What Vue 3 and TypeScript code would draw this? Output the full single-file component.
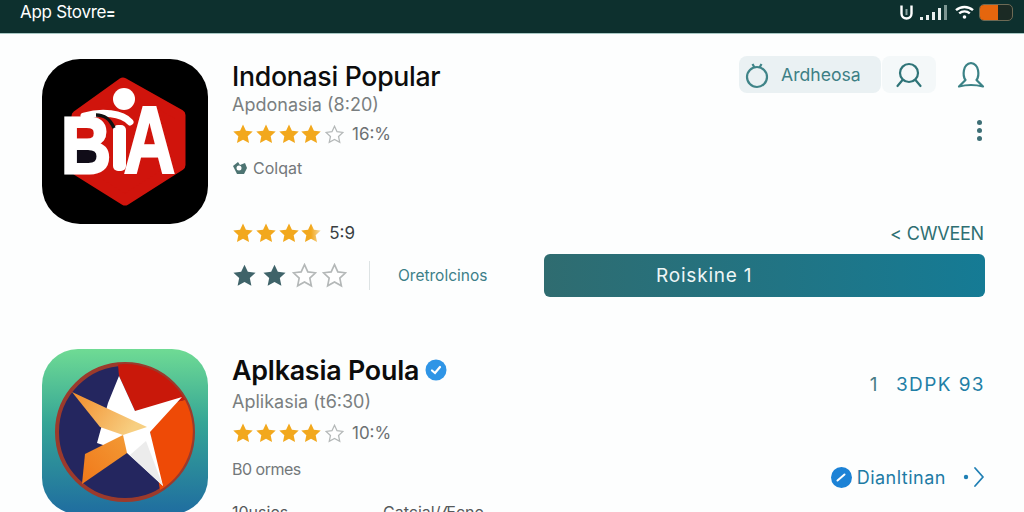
<script setup lang="ts">
const starPath = 'M12 1.6l3.2 6.9 7.4.9-5.5 5.1 1.5 7.4L12 18.2l-6.6 3.7 1.5-7.4-5.5-5.1 7.4-.9z'
const signal: number[] = [3, 5, 8, 12, 15]
const fourOfFive = [1, 1, 1, 1]
</script>

<template>
  <div class="page">
    <header class="status">
      <span class="brand">App Stovre<small>=</small></span>
      <div class="sys">
        <svg class="glyph" width="15" height="16" viewBox="0 0 15 16" fill="none" stroke="#fff" stroke-width="2.4">
          <path d="M2.5 1.5v8a5 5 0 0 0 10 0v-8" />
          <path d="M7.5 5v6" stroke-width="2" stroke="#8aa3a0" />
        </svg>
        <div class="bars">
          <i v-for="h in signal" :key="h" :style="{ height: h + 'px' }" />
        </div>
        <svg class="wifi" width="19" height="15" viewBox="0 0 19 15" fill="none" stroke="#fff" stroke-width="2.4">
          <path d="M1 5.2c4.8-4.3 12.200-4.300 17 0" />
          <path d="M4.200 8.400c3-2.700 7.600-2.700 10.600 0" />
          <circle cx="9.500" cy="12" r="1.800" fill="#fff" stroke="none" />
        </svg>
        <div class="battery"><b /></div>
      </div>
    </header>

    <main class="list">
      <section class="app first">
        <svg class="logo" viewBox="0 0 166 165" width="166" height="165">
          <rect width="166" height="165" rx="38" fill="#000" />
          <polygon points="81,24 138,56 138,106 83,141 35,111 35,57" fill="#d0140c" stroke="#d0140c" stroke-width="11" stroke-linejoin="round" />
          <circle cx="82" cy="40" r="11" fill="#fff" />
          <rect x="32" y="86" width="28" height="22" rx="6" fill="#100c18" />
          <text x="19" y="114" class="logo-t" font-size="80" textLength="50" lengthAdjust="spacingAndGlyphs">B</text>
          <text x="82" y="114" class="logo-t" font-size="95" textLength="51" lengthAdjust="spacingAndGlyphs">A</text>
          <rect x="71" y="66" width="13" height="46" rx="5" fill="#fff" />
          <path d="M42 57c18-5 38-3 46 6" fill="none" stroke="#fff" stroke-width="7" stroke-linecap="round" />
          <path d="M54 56c9 0 14 4 18 13" fill="none" stroke="#111" stroke-width="3.500" />
        </svg>

        <div class="info">
          <div class="head">
            <div class="meta">
              <h2 class="title">Indonasi Popular</h2>
              <p class="sub">Apdonasia (8:20)</p>
              <div class="rating">
                <svg v-for="(s, i) in fourOfFive" :key="i" class="star" viewBox="0 0 24 24"><path :d="starPath" fill="#f2a81d" /></svg>
                <svg class="star empty" viewBox="0 0 24 24"><path :d="starPath" /></svg>
                <span class="score">16:%</span>
              </div>
              <p class="note">
                <svg width="16" height="16" viewBox="0 0 16 16">
                  <path d="M1 6l5-4 2 3 5-2 2 5-3 6H5z" fill="#4d7472" />
                  <circle cx="7" cy="8" r="2.500" fill="#fff" />
                </svg>
                Colqat
              </p>
            </div>
            <div class="side">
              <div class="tools">
                <div class="pill">
                  <svg width="24" height="28" viewBox="0 0 24 28" fill="none" stroke="#3f8488" stroke-width="2.200">
                    <circle cx="12" cy="16" r="10" />
                    <path d="M7.500 3l2 3.500M16.500 3l-2 3.500" />
                  </svg>
                  <span>Ardheosa</span>
                </div>
                <div class="tool square">
                  <svg width="28" height="28" viewBox="0 0 28 28" fill="none" stroke="#2f7478" stroke-width="2.200" stroke-linecap="round">
                    <circle cx="14" cy="12" r="9" />
                    <path d="M7.500 19L2.500 25M20.500 19l5 6" />
                  </svg>
                </div>
                <svg class="user" width="28" height="28" viewBox="0 0 28 28" fill="none" stroke="#3b8286" stroke-width="2.200" stroke-linecap="round" stroke-linejoin="round">
                  <path d="M8.500 19C5.500 15 5.500 3 14 2c8.500 1 8.500 13 5.500 17L26 25.500Q14 22.500 2 25.500z" />
                </svg>
              </div>
              <div class="more"><i /><i /><i /></div>
            </div>
          </div>

          <div class="rate-row">
            <div class="rating">
              <svg v-for="(s, i) in [1, 1, 1]" :key="i" class="star" viewBox="0 0 24 24"><path :d="starPath" fill="#f2a81d" /></svg>
              <svg class="star" viewBox="0 0 24 24">
                <defs>
                  <linearGradient id="halfStar"><stop offset="0.5" stop-color="#f2a81d" /><stop offset="1" stop-color="#f5dca8" /></linearGradient>
                </defs>
                <path :d="starPath" fill="url(#halfStar)" />
              </svg>
              <span class="score dark">5:9</span>
            </div>
            <span class="cween">&lt; CWVEEN</span>
          </div>

          <div class="buy-row">
            <div class="dark-stars">
              <svg class="big" viewBox="0 0 24 24"><path :d="starPath" fill="#3f6369" /></svg>
              <svg class="big" viewBox="0 0 24 24"><path :d="starPath" fill="#3f6369" /></svg>
              <svg class="big empty" viewBox="0 0 24 24"><path :d="starPath" /></svg>
              <svg class="big empty" viewBox="0 0 24 24"><path :d="starPath" /></svg>
            </div>
            <span class="divider" />
            <span class="plain">Oretrolcinos</span>
            <button class="cta">Roiskine 1</button>
          </div>
        </div>
      </section>

      <section class="app second">
        <svg class="logo" viewBox="0 0 166 165" width="166" height="165">
          <defs>
            <linearGradient id="tile" x1="0" y1="0" x2="0" y2="1">
              <stop offset="0" stop-color="#6fdb94" />
              <stop offset="0.45" stop-color="#35a596" />
              <stop offset="1" stop-color="#1f6da0" />
            </linearGradient>
            <linearGradient id="wingA" x1="0" y1="0" x2="1" y2="0.4">
              <stop offset="0" stop-color="#f28c2a" />
              <stop offset="1" stop-color="#f7cf82" />
            </linearGradient>
            <linearGradient id="wingB" x1="0" y1="1" x2="1" y2="0">
              <stop offset="0" stop-color="#f0781a" />
              <stop offset="1" stop-color="#f39a35" />
            </linearGradient>
          </defs>
          <rect width="166" height="165" rx="36" fill="url(#tile)" />
          <circle cx="83" cy="83" r="68" fill="#24265f" stroke="#9b3a2c" stroke-width="4" />
          <path d="M76 15.400A68 68 0 0 1 143 51L93 62 77 27z" fill="#c9180a" />
          <path d="M143 51A68 68 0 0 1 118 141L108 83 93 62z" fill="#ee4a06" />
          <polygon points="77,27 93,62 140,48 108,83 121,137 85,104 55,94 66,54" fill="#fff" />
          <polygon points="104,92 121,137 88,106" fill="#ececec" />
          <polygon points="30,43 105,78 81,86 58,78" fill="url(#wingA)" />
          <polygon points="43,105 81,86 85,104 40,135" fill="url(#wingB)" />
        </svg>

        <div class="info">
          <div class="head">
            <div class="meta">
              <h2 class="title">
                Aplkasia Poula
                <svg class="check" width="22" height="22" viewBox="0 0 22 22">
                  <circle cx="11" cy="11" r="10.500" fill="#2f95e6" />
                  <path d="M7 11.500l3 2.500 5-6" fill="none" stroke="#fff" stroke-width="2.200" stroke-linecap="round" />
                </svg>
              </h2>
              <p class="sub">Aplikasia (t6:30)</p>
              <div class="rating">
                <svg v-for="(s, i) in fourOfFive" :key="i" class="star" viewBox="0 0 24 24"><path :d="starPath" fill="#f2a81d" /></svg>
                <svg class="star empty" viewBox="0 0 24 24"><path :d="starPath" /></svg>
                <span class="score">10:%</span>
              </div>
              <p class="note">B0 ormes</p>
            </div>
            <div class="side right">
              <span class="code"><em>1</em>3DPK 93</span>
              <div class="open">
                <svg width="21" height="21" viewBox="0 0 21 21">
                  <circle cx="10.500" cy="10.500" r="10.500" fill="#1c82d6" />
                  <path d="M6.500 13.500l7-6" stroke="#fff" stroke-width="2" stroke-linecap="round" />
                </svg>
                <span>Dianltinan</span>
                <svg class="go" width="22" height="22" viewBox="0 0 22 22" fill="none" stroke="#1f7fb4" stroke-width="1.800" stroke-linecap="round" stroke-linejoin="round">
                  <path d="M12 2l8 9-8 9" />
                  <circle cx="3" cy="11" r="2.200" fill="#1f7fb4" stroke="none" />
                </svg>
              </div>
            </div>
          </div>
          <div class="cut">
            <span class="cut-a">10usies</span>
            <span>Catcial/Æcne</span>
          </div>
        </div>
      </section>
    </main>
  </div>
</template>

<style>
html, body { margin: 0; background: #fff; }
</style>

<style scoped>
.page {
  width: 1024px;
  height: 512px;
  overflow: hidden;
  background: #fdfefe;
  font-family: Inter, "Liberation Sans", sans-serif;
  color: #111;
}
.status {
  box-sizing: border-box;
  height: 34px;
  border-bottom: 1px solid #a8c8c4;
  background: #0d302e;
  display: flex;
  justify-content: space-between;
  align-items: flex-start;
  padding: 0 11px 0 20px;
  color: #fff;
}
.brand { font-size: 17px; line-height: 24px; letter-spacing: -0.3px; }
.brand small { font-size: 14px; font-weight: 700; }
.sys { display: flex; align-items: center; height: 24px; }
.glyph { margin-right: 6px; }
.bars { display: flex; align-items: flex-end; gap: 2.500px; margin-right: 8px; height: 16px; }
.bars i { width: 3.500px; background: #e8efee; }
.bars i:last-child { background: #7d9692; }
.wifi { margin-right: 5px; }
.battery {
  box-sizing: border-box;
  width: 34px;
  height: 17px;
  border: 1.500px solid #6d6a55;
  border-radius: 5px;
  background: #1b2a24;
  overflow: hidden;
}
.battery b { display: block; width: 18px; height: 100%; background: #e5660e; }

.list { padding: 22px 39px 0 42px; }
.app { display: grid; grid-template-columns: 166px 1fr; column-gap: 24px; align-items: start; }
.logo { display: block; margin-top: 3px; }
.logo-t {
  fill: #fff;
  stroke: #fff;
  stroke-width: 3;
  font-family: "Liberation Sans", sans-serif;
  font-weight: 700;
}
.second { margin-top: 52px; }
.second .logo { margin-top: 0; }
.second .meta { padding-top: 4px; }
.meta { padding-top: 3px; }

.head { display: flex; justify-content: space-between; }
.title {
  margin: 0;
  font-size: 26.700px;
  line-height: 34px;
  font-weight: 500;
  letter-spacing: -0.3px;
  color: #0c0c0c;
  display: flex;
  align-items: center;
  gap: 6px;
}
.second .title { font-size: 26.800px; letter-spacing: -0.2px; font-weight: 600; }
.sub { margin: 0; font-size: 18px; line-height: 24px; color: #7a7f80; }
.second .sub { margin-top: 3px; }
.rating { display: flex; align-items: center; height: 24px; margin-top: 5px; }
.second .rating { margin-top: 7px; }
.star { width: 22px; height: 22px; margin-right: 0.800px; }
.star.empty { width: 19px; height: 19px; margin: 0 2.300px 0 1.500px; }
.empty path { fill: #fff; stroke: #b4b8b8; stroke-width: 1.600; }
.score { margin-left: 6px; font-size: 17px; color: #6c7072; }
.score.dark { margin-left: 6px; color: #3a3f42; }
.note {
  margin: 11px 0 0;
  font-size: 16px;
  line-height: 22px;
  color: #73787a;
  display: flex;
  align-items: center;
  gap: 5px;
}
.second .note { margin-top: 13px; letter-spacing: -0.5px; }

.side { width: 246px; display: flex; flex-direction: column; align-items: flex-end; }
.tools { display: flex; align-items: center; height: 37px; }
.pill {
  box-sizing: border-box;
  width: 142px;
  height: 37px;
  border-radius: 8px;
  background: #eaf1f3;
  display: flex;
  align-items: center;
  gap: 12px;
  padding-left: 6px;
  color: #3d7f85;
  font-size: 17.600px;
}
.tool.square {
  width: 54px;
  height: 37px;
  margin-left: 1px;
  border-radius: 8px;
  background: #f4f8f9;
  display: flex;
  align-items: center;
  justify-content: center;
}
.user { margin-left: 21px; }
.more { display: flex; flex-direction: column; gap: 3px; margin: 27px 3px 0 0; }
.more i { width: 5px; height: 5px; border-radius: 50%; background: #3d6f76; }

.rate-row { display: flex; justify-content: space-between; align-items: center; margin-top: 42px; }
.rate-row .rating { margin-top: 0; }
.cween { font-size: 18px; color: #2e6f72; letter-spacing: -0.2px; margin-right: 1px; }

.buy-row { display: flex; align-items: center; height: 43px; margin-top: 9px; }
.dark-stars { display: flex; gap: 4px; width: 116px; }
.big { width: 25px; height: 25px; margin-right: 1px; }
.divider { width: 1px; height: 29px; background: #dde3e4; margin: 0 28px 0 21px; }
.plain { width: 146px; font-size: 15.500px; color: #3c7f88; }
.cta {
  flex: 1;
  height: 43px;
  border: 0;
  border-radius: 6px;
  padding: 0 0 0 112px;
  text-align: left;
  background: linear-gradient(90deg, #2f6c70, #157b95);
  color: #eef6f6;
  font: 400 19px Inter, "Liberation Sans", sans-serif;
  letter-spacing: 0.8px;
}

.right { height: 139px; padding-top: 25px; box-sizing: border-box; justify-content: space-between; }
.code { font-size: 19px; color: #1f7fa6; letter-spacing: 1.400px; line-height: 22px; margin-right: 0; }
.code em { font-style: normal; color: #4a7c86; margin-right: 17px; }
.open { display: flex; align-items: center; color: #1d7ba5; font-size: 18px; letter-spacing: 0.5px; }
.open span { margin-left: 5px; }
.go { margin-left: 17px; }

.cut {
  display: flex;
  margin-top: 13px;
  font-size: 16px;
  line-height: 22px;
  color: #55595b;
}
.cut-a { width: 151px; }
</style>
